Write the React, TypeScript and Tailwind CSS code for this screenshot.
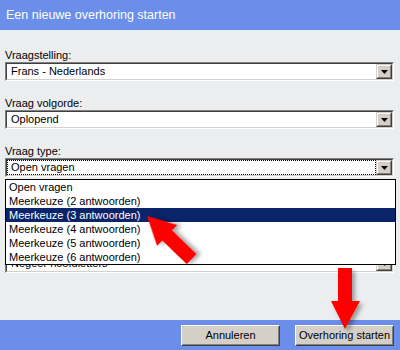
import React from "react";

function Arrow() {
  return (
    <div className="w-[16px] h-[15px] bg-[#d4d0c8] border border-t-[#d4d0c8] border-l-[#d4d0c8] border-b-[#404040] border-r-[#404040]">
      <div className="w-full h-full flex items-center justify-center border border-t-white border-l-white border-b-[#808080] border-r-[#808080]">
        <svg width="7" height="4" viewBox="0 0 7 4">
          <polygon points="0,0 7,0 3.5,4" fill="#000" />
        </svg>
      </div>
    </div>
  );
}

function Select({ value, focused }: { value: string; focused?: boolean }) {
  return (
    <div className="h-[19px] flex border border-t-[#808080] border-l-[#808080] border-b-white border-r-white">
      <div className="flex-1 flex border border-t-[#404040] border-l-[#404040] border-b-[#d4d0c8] border-r-[#d4d0c8] bg-white">
        <div
          className={
            focused
              ? "flex-1 flex items-center pl-[3px] border border-dotted border-black leading-none"
              : "flex-1 flex items-center pl-[4px] leading-none"
          }
        >
          {value}
        </div>
        <Arrow />
      </div>
    </div>
  );
}

function Field({
  label,
  value,
  focused,
  hidden,
  labelHidden,
}: {
  label: string;
  value: string;
  focused?: boolean;
  hidden?: boolean;
  labelHidden?: boolean;
}) {
  return (
    <div className={hidden ? "mb-[16px] invisible" : "mb-[16px]"}>
      <div className={labelHidden ? "h-[13px] leading-[13px] invisible" : "h-[13px] leading-[13px]"}>{label}</div>
      <Select value={value} focused={focused} />
    </div>
  );
}

function Button({ children }: { children: React.ReactNode }) {
  return (
    <div className="w-[99px] h-[21px] bg-[#d4d0c8] border border-t-white border-l-white border-b-[#404040] border-r-[#404040]">
      <div className="w-full h-full flex items-center justify-center border border-t-[#d4d0c8] border-l-[#d4d0c8] border-b-[#808080] border-r-[#808080] text-black">
        {children}
      </div>
    </div>
  );
}

export default function App() {
  const items = [
    "Open vragen",
    "Meerkeuze (2 antwoorden)",
    "Meerkeuze (3 antwoorden)",
    "Meerkeuze (4 antwoorden)",
    "Meerkeuze (5 antwoorden)",
    "Meerkeuze (6 antwoorden)",
  ];
  return (
    <div className="relative w-[400px] h-[350px] flex flex-col bg-[#ecedef] font-['Liberation_Sans',Arial,sans-serif] text-[11px] text-black overflow-hidden">
      <div className="h-[30px] bg-[#6b8eea] flex items-center pl-[6px] text-white text-[12.5px]">
        Een nieuwe overhoring starten
      </div>
      <div className="flex-1 pt-[19px] pl-[5px] pr-[6px]">
        <Field label="Vraagstelling:" value="Frans - Nederlands" />
        <Field label="Vraag volgorde:" value="Oplopend" />
        <Field label="Vraag type:" value="Open vragen" focused />
        <Field label="Vraag richting:" value="Normaal" hidden />
        <Field label="Hoofdletters:" value="Negeer hoofdletters" labelHidden />
      </div>
      <div className="h-[30px] bg-[#6b8eea] flex items-center justify-end gap-[15px] pr-[6px]">
        <Button>Annuleren</Button>
        <Button>Overhoring starten</Button>
      </div>

      <div className="absolute left-[5px] top-[179px] w-[391px] h-[86px] bg-white border border-black">
        {items.map((t, i) => (
          <div
            key={t}
            className={
              i === 2
                ? "h-[14px] leading-[14px] pl-[3px] bg-[#0a246a] text-white"
                : "h-[14px] leading-[14px] pl-[3px] text-black"
            }
          >
            {t}
          </div>
        ))}
      </div>

      <svg className="absolute left-0 top-0 pointer-events-none" width="400" height="350" viewBox="0 0 400 350">
        <defs>
          <filter id="sh" x="-50%" y="-50%" width="200%" height="200%">
            <feDropShadow dx="3" dy="3" stdDeviation="2" floodColor="#000" floodOpacity="0.35" />
          </filter>
        </defs>
        <polygon
          filter="url(#sh)"
          fill="#ff0000"
          points="338,268 352,268 352,301 360,301 345,329 331,301 338,301"
        />
        <g transform="translate(147,216) rotate(-46)">
          <polygon
            filter="url(#sh)"
            fill="#ff0000"
            points="0,0 14.5,28 7,28 7,62 -7,62 -7,28 -14.5,28"
          />
        </g>
      </svg>
    </div>
  );
}
